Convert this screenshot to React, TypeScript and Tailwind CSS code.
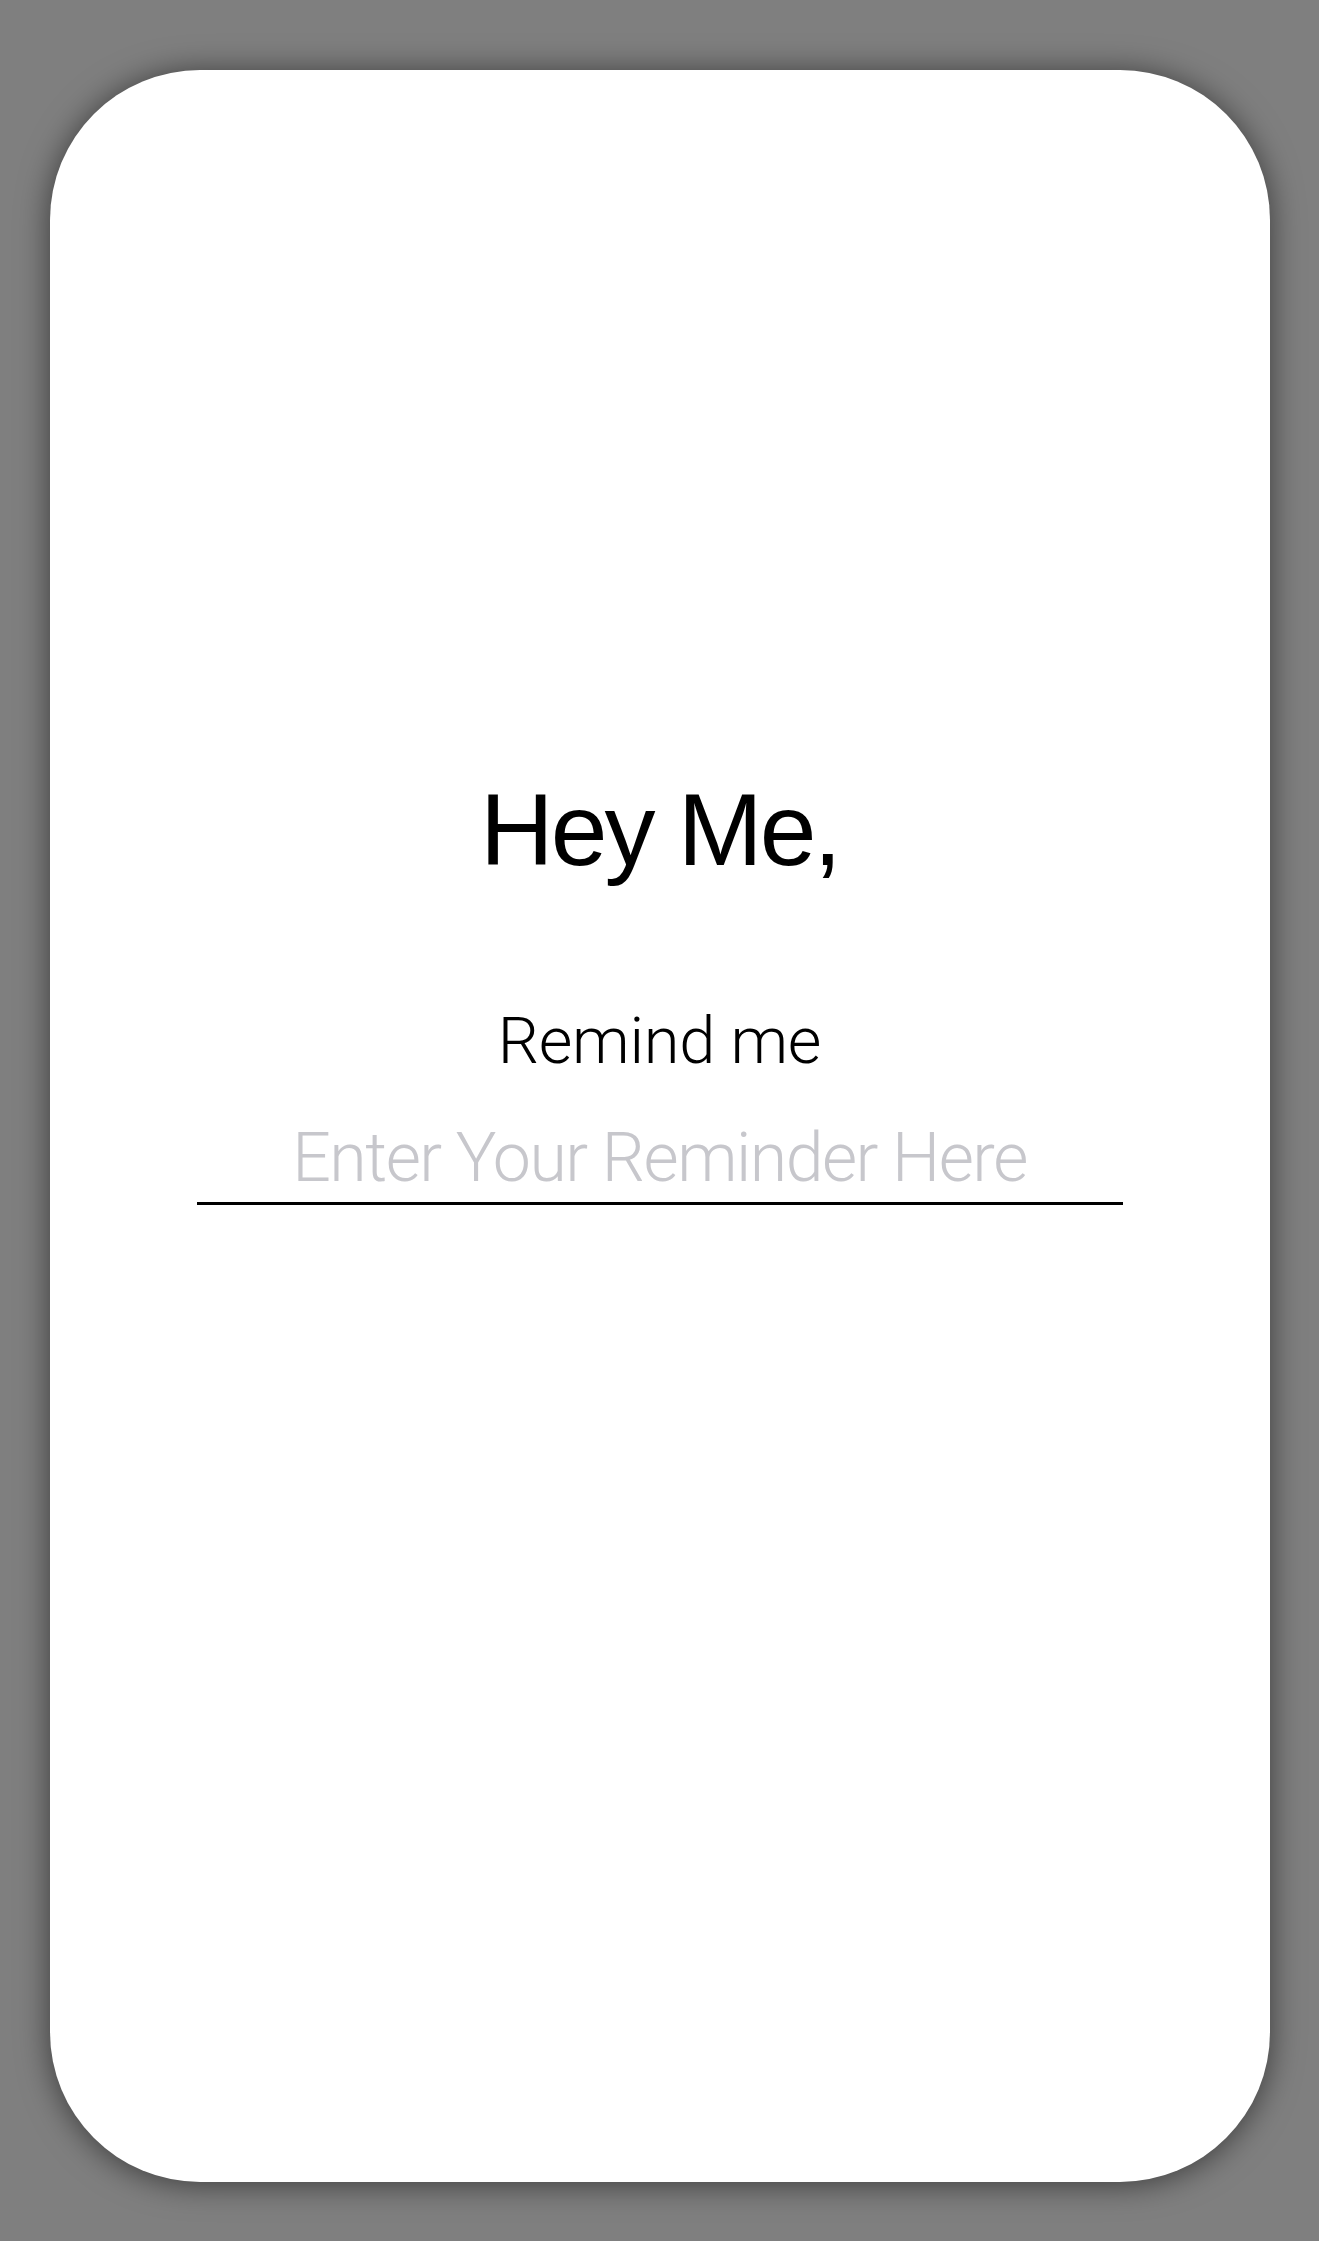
import { useState } from 'react';

export default function App() {
  const [reminder, setReminder] = useState('');

  return (
    <div className="flex min-h-[2241px] w-full justify-center bg-[#7f7f7f] pt-[70px]">
      <div className="flex h-[2112px] w-[1220px] flex-col items-center rounded-[150px] bg-white pt-[709px] shadow-[0_2px_32px_rgba(0,0,0,0.55)]">
        <h1 className="font-['Liberation_Sans',Arial,sans-serif] text-[102px] leading-none font-normal tracking-[-3px] text-black">
          Hey Me,
        </h1>
        <p className="mt-[128px] font-['Roboto',sans-serif] text-[65px] leading-none font-light tracking-[-0.3px] text-black">
          Remind me
        </p>
        <input
          value={reminder}
          onChange={(e) => setReminder(e.target.value)}
          placeholder="Enter Your Reminder Here"
          className="mt-[44px] w-[926px] border-b-[3px] border-black bg-transparent pb-[4px] text-center font-['Roboto',sans-serif] text-[68px] leading-none font-light tracking-[-1.5px] text-black outline-none placeholder:text-[#c7c7cc]"
        />
      </div>
    </div>
  );
}
